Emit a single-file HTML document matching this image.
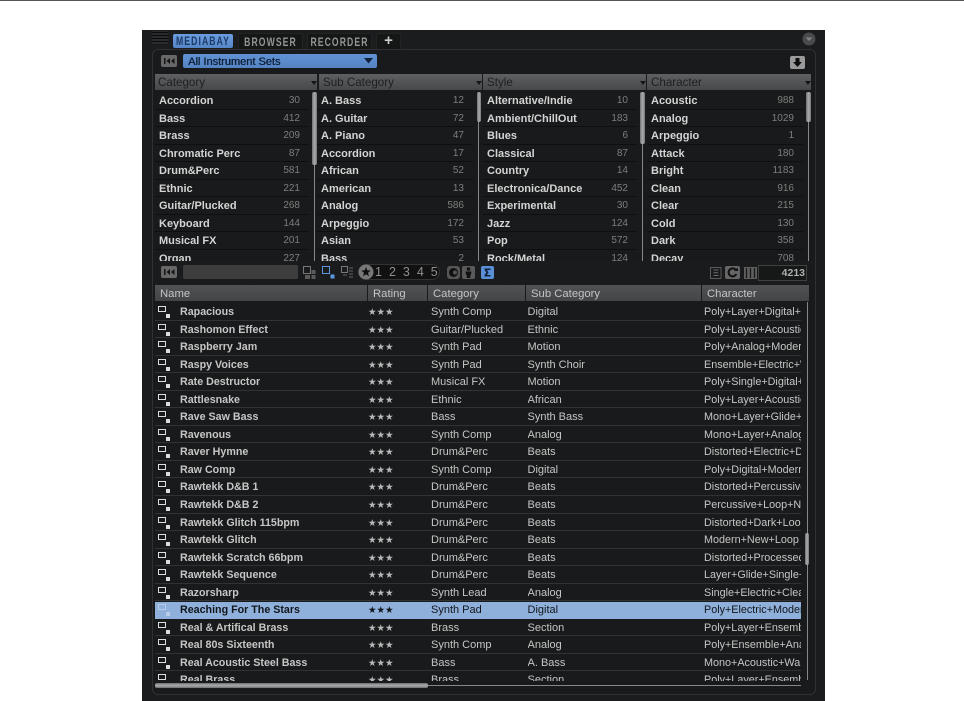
<!DOCTYPE html>
<html><head><meta charset="utf-8"><style>
html,body{margin:0;padding:0;background:#fff}
body{width:964px;height:701px;position:relative;overflow:hidden;font-family:"Liberation Sans",sans-serif}
div,span,svg{position:absolute;box-sizing:border-box}
#top{left:0;top:0;width:964px;height:1px;background:#555}
#app{left:142px;top:30px;width:683px;height:671px;background:#1b1c1d;overflow:hidden}
#inner{left:152px;top:49px;width:664px;height:646px;background:#191a1b;border:1px solid #303132;border-radius:6px}
.tab{top:33px;height:16px;background:#151616;border:1px solid #232324;border-bottom:0;border-radius:2px 2px 0 0;color:#949596;font:bold 12px/16px "Liberation Sans",sans-serif;text-align:center}
.tab span{left:-20px;right:-20px;top:0;letter-spacing:1.5px;transform:scaleX(.72);white-space:nowrap}
.tab.on{top:34px;height:14px;background:linear-gradient(#6b9ee0,#5585c6);border:0;border-radius:2px;color:#1c3a66;line-height:15px}
.btn{background:#686868;border-radius:2px}
.hd{top:74px;height:16px;background:linear-gradient(#5e6062,#46484a);color:#1e1f20;font:11.6px/18px "Liberation Sans",sans-serif;padding-left:3px}
.hd:after{content:"";position:absolute;right:0;top:7px;border:3.5px solid transparent;border-top:4px solid #151515;border-bottom:0}
.list{top:92px;height:169px;overflow:hidden}
.list div{position:relative;display:block;height:17.55px;border-bottom:1px solid #0f0f0f;color:#d4d4d4;font:bold 11px/19px "Liberation Sans",sans-serif;padding-left:4px}
.list i{position:absolute;right:9px;top:0;font:10px/18px "Liberation Sans",sans-serif;color:#7e7e7e}
.sb{width:1px;background:#85878a}
.th{background:linear-gradient(90deg,#6f7072,#aaacae 50%,#77787a);border-radius:2px}
.lh{top:285px;height:16px;background:linear-gradient(#505254,#434547);color:#c4c4c4;font:11.3px/18px "Liberation Sans",sans-serif;padding-left:5px}
#rows{left:155px;top:303px;width:646px;height:378px;overflow:hidden}
.r{position:relative;display:block;height:17.55px;border-bottom:1px solid #313233;color:#c6c6c6;font:11px/19px "Liberation Sans",sans-serif;white-space:nowrap}
.r span{top:0;overflow:hidden}
.r .a{left:3px;top:3px;width:8px;height:6px;border:1px solid #ddd}
.r .b{left:11px;top:11px;width:4px;height:4px;background:#ddd}
.r .n{left:25px;font-weight:bold;font-size:10.7px;color:#c6c6c6}
.r .s{left:213px;font-size:9.5px;letter-spacing:0;color:#b9b9b9}
.r .c{left:276px}
.r .u{left:372.5px}
.r .h{left:549px;width:97px;font-size:10.8px}
.r.sel{background:#8fb0da;color:#12161c;border-bottom:0;border-top:1px solid #1a1b1c;background-clip:padding-box}
.r.sel span{margin-top:-1px}
.r.sel .n,.r.sel .s{color:#12161c}
.r.sel .a{border-color:#b8cde8}
.r.sel .b{background:#b8cde8}
</style></head><body>
<div id="top"></div>
<div id="app"></div>
<div id="inner"></div>

<svg style="left:152px;top:31px" width="16" height="13"><rect width="16" height="13" fill="#2a2b2c"/><path d="M0 1.500h16M0 4.500h16M0 7.500h16M0 10.500h16" stroke="#0c0c0c" stroke-width="1"/></svg>
<div class="tab on" style="left:173px;width:60px"><span>MEDIABAY</span></div>
<div class="tab" style="left:238px;width:65px"><span>BROWSER</span></div>
<div class="tab" style="left:307px;width:65px"><span>RECORDER</span></div>
<div class="tab" style="left:376px;width:25px;color:#ccc;font-size:15px;line-height:13px">+</div>
<svg style="left:802px;top:32px" width="14" height="14"><circle cx="7" cy="7" r="6.500" fill="#4a4b4c"/><path d="M3.500 5.500h7L7 9z" fill="#828384"/></svg>

<div class="btn" style="left:161px;top:55px;width:16px;height:12px"></div>
<svg style="left:161px;top:55px" width="16" height="12"><path d="M3 3h1.500v6H3zM9 3v6L5.500 6zM13.500 3v6L10 6z" fill="#151515"/></svg>
<div style="left:183px;top:54px;width:194px;height:14px;background:linear-gradient(#6092d4,#5583c2);border-radius:2px;color:#10213a;font:11px/16px 'Liberation Sans',sans-serif;text-shadow:.4px 0 0 #10213a;padding-left:5px">All Instrument Sets</div>
<svg style="left:364px;top:58px" width="10" height="6"><path d="M0 0h9L4.500 5.500z" fill="#11233c"/></svg>
<svg style="left:790px;top:56px" width="15" height="13"><rect width="15" height="13" rx="2" fill="#9a9a9a"/><path d="M5.500 2h4v4h2.500L7.500 11 3 6h2.500z" fill="#0d0d0d"/></svg>

<div class="hd" style="left:155px;width:162px">Category</div>
<div class="hd" style="left:319px;width:163px;padding-left:4px">Sub Category</div>
<div class="hd" style="left:483px;width:163px;padding-left:4px">Style</div>
<div class="hd" style="left:647px;width:164px;padding-left:4px">Character</div>

<div class="list" style="left:155px;width:154px">
<div>Accordion<i>30</i></div><div>Bass<i>412</i></div><div>Brass<i>209</i></div><div>Chromatic Perc<i>87</i></div><div>Drum&amp;Perc<i>581</i></div><div>Ethnic<i>221</i></div><div>Guitar/Plucked<i>268</i></div><div>Keyboard<i>144</i></div><div>Musical FX<i>201</i></div><div>Organ<i>227</i></div>
</div>
<div class="list" style="left:317px;width:156px">
<div>A. Bass<i>12</i></div><div>A. Guitar<i>72</i></div><div>A. Piano<i>47</i></div><div>Accordion<i>17</i></div><div>African<i>52</i></div><div>American<i>13</i></div><div>Analog<i>586</i></div><div>Arpeggio<i>172</i></div><div>Asian<i>53</i></div><div>Bass<i>2</i></div>
</div>
<div class="list" style="left:483px;width:154px">
<div>Alternative/Indie<i>10</i></div><div>Ambient/ChillOut<i>183</i></div><div>Blues<i>6</i></div><div>Classical<i>87</i></div><div>Country<i>14</i></div><div>Electronica/Dance<i>452</i></div><div>Experimental<i>30</i></div><div>Jazz<i>124</i></div><div>Pop<i>572</i></div><div>Rock/Metal<i>124</i></div>
</div>
<div class="list" style="left:647px;width:156px">
<div>Acoustic<i>988</i></div><div>Analog<i>1029</i></div><div>Arpeggio<i>1</i></div><div>Attack<i>180</i></div><div>Bright<i>1183</i></div><div>Clean<i>916</i></div><div>Clear<i>215</i></div><div>Cold<i>130</i></div><div>Dark<i>358</i></div><div>Decay<i>708</i></div>
</div>

<div class="sb" style="left:314px;top:92px;height:169px"></div>
<div class="th" style="left:312px;top:92px;width:5px;height:73px"></div>
<div class="sb" style="left:478px;top:92px;height:169px"></div>
<div class="th" style="left:477px;top:92px;width:4px;height:30px"></div>
<div class="sb" style="left:642px;top:92px;height:169px"></div>
<div class="th" style="left:640px;top:92px;width:5px;height:52px"></div>
<div class="sb" style="left:808px;top:92px;height:169px"></div>
<div class="th" style="left:806px;top:92px;width:5px;height:30px"></div>

<div style="left:153px;top:261px;width:660px;height:24px;background:#1a1b1c"></div>
<div class="btn" style="left:161px;top:266px;width:16px;height:12px"></div>
<svg style="left:161px;top:266px" width="16" height="12"><path d="M3 3h1.500v6H3zM9 3v6L5.500 6zM13.500 3v6L10 6z" fill="#151515"/></svg>
<div style="left:183px;top:265px;width:115px;height:14px;background:#3d3d3d;border-radius:2px"></div>
<svg style="left:303px;top:266px" width="14" height="13" fill="none"><rect x=".5" y=".5" width="7" height="7" stroke="#777"/><path d="M8.500 4h4v4h-4zM2 9h5v4H2zM8.500 9h4v4h-4z" fill="#5a5a5a"/></svg>
<svg style="left:321px;top:265px" width="14" height="14" fill="none"><rect x="1.500" y="1.500" width="7" height="7" stroke="#5f98e0"/><rect x="9.500" y="9.500" width="4" height="4" fill="#5f98e0"/></svg>
<svg style="left:340px;top:266px" width="14" height="13" fill="none"><rect x="1.500" y=".5" width="6" height="6" stroke="#777"/><path d="M9 2h4M9 5h4M9 8h4M9 11h4M3 9h4" stroke="#555" stroke-width="1.300"/></svg>
<div style="left:358px;top:264px;width:82px;height:16px;background:#111;border:1px solid #333;border-radius:8px"></div>
<svg style="left:358px;top:264px" width="16" height="16"><circle cx="8" cy="8" r="7.500" fill="#777"/><path d="M8 3l1.300 3.400 3.500.1-2.800 2.200 1 3.500L8 10.200 5 12.200l1-3.500-2.800-2.200 3.500-.1z" fill="#0e0e0e"/></svg>
<span style="left:375px;top:265px;font:12.500px/15px 'Liberation Sans',sans-serif;color:#8f8f8f;letter-spacing:7px;white-space:nowrap">12345</span>
<svg style="left:447px;top:266px" width="13" height="13"><rect width="13" height="13" rx="3" fill="#555"/><circle cx="6.500" cy="6.500" r="4.500" fill="#111"/><circle cx="8" cy="6.500" r="2" fill="#555"/></svg>
<svg style="left:462px;top:266px" width="13" height="13"><rect width="13" height="13" rx="2" fill="#5a5a5a"/><circle cx="6.500" cy="3" r="1.800" fill="#111"/><path d="M3.500 5.500h6l-.6 3.500H8.300v3H4.700V9h-.6z" fill="#111"/></svg>
<svg style="left:481px;top:266px" width="13" height="13"><rect width="13" height="13" rx="2" fill="#5a8fd6"/><path d="M3.500 2.500h6V4H6L7.500 6.500 6 9h3.500v1.500h-6V9.300L5.300 6.500 3.500 3.700z" fill="#10233f"/></svg>
<svg style="left:710px;top:267px" width="12" height="12" fill="none"><rect x=".5" y=".5" width="10.500" height="11" stroke="#5a5a5a"/><path d="M3.500 3h5M3.500 5.800h4.500M3.500 8.500h5" stroke="#6a6a6a"/></svg>
<svg style="left:725px;top:266px" width="15" height="13"><rect width="15" height="13" rx="2" fill="#666"/><path d="M11 4.200A4 4 0 1 0 11.300 8" fill="none" stroke="#111" stroke-width="2"/><path d="M9 5h4V1.500z" fill="#111"/></svg>
<svg style="left:744px;top:267px" width="13" height="12"><rect width="13" height="12" fill="#5e5e5e"/><path d="M2.500 1v10M6.500 1v10M10.500 1v10" stroke="#1a1a1a" stroke-width="1.300"/></svg>
<div style="left:758px;top:265px;width:49px;height:16px;border:1px solid #3f4041;background:#161717;color:#b0b0b0;font:bold 10.500px/15px 'Liberation Sans',sans-serif;text-align:right;padding-right:1px">4213</div>

<div class="lh" style="left:155px;width:212px">Name</div>
<div class="lh" style="left:368px;width:59px">Rating</div>
<div class="lh" style="left:428px;width:97px">Category</div>
<div class="lh" style="left:526px;width:175px">Sub Category</div>
<div class="lh" style="left:702px;width:107px">Character</div>

<div id="rows">
<div class="r"><span class="a"></span><span class="b"></span><span class="n">Rapacious</span><span class="s">★★★</span><span class="c">Synth Comp</span><span class="u">Digital</span><span class="h">Poly+Layer+Digital+</span></div>
<div class="r"><span class="a"></span><span class="b"></span><span class="n">Rashomon Effect</span><span class="s">★★★</span><span class="c">Guitar/Plucked</span><span class="u">Ethnic</span><span class="h">Poly+Layer+Acoustic</span></div>
<div class="r"><span class="a"></span><span class="b"></span><span class="n">Raspberry Jam</span><span class="s">★★★</span><span class="c">Synth Pad</span><span class="u">Motion</span><span class="h">Poly+Analog+Modern</span></div>
<div class="r"><span class="a"></span><span class="b"></span><span class="n">Raspy Voices</span><span class="s">★★★</span><span class="c">Synth Pad</span><span class="u">Synth Choir</span><span class="h">Ensemble+Electric+Warm</span></div>
<div class="r"><span class="a"></span><span class="b"></span><span class="n">Rate Destructor</span><span class="s">★★★</span><span class="c">Musical FX</span><span class="u">Motion</span><span class="h">Poly+Single+Digital+Cold</span></div>
<div class="r"><span class="a"></span><span class="b"></span><span class="n">Rattlesnake</span><span class="s">★★★</span><span class="c">Ethnic</span><span class="u">African</span><span class="h">Poly+Layer+Acoustic</span></div>
<div class="r"><span class="a"></span><span class="b"></span><span class="n">Rave Saw Bass</span><span class="s">★★★</span><span class="c">Bass</span><span class="u">Synth Bass</span><span class="h">Mono+Layer+Glide+Hard</span></div>
<div class="r"><span class="a"></span><span class="b"></span><span class="n">Ravenous</span><span class="s">★★★</span><span class="c">Synth Comp</span><span class="u">Analog</span><span class="h">Mono+Layer+Analog</span></div>
<div class="r"><span class="a"></span><span class="b"></span><span class="n">Raver Hymne</span><span class="s">★★★</span><span class="c">Drum&amp;Perc</span><span class="u">Beats</span><span class="h">Distorted+Electric+Dark</span></div>
<div class="r"><span class="a"></span><span class="b"></span><span class="n">Raw Comp</span><span class="s">★★★</span><span class="c">Synth Comp</span><span class="u">Digital</span><span class="h">Poly+Digital+Modern</span></div>
<div class="r"><span class="a"></span><span class="b"></span><span class="n">Rawtekk D&amp;B 1</span><span class="s">★★★</span><span class="c">Drum&amp;Perc</span><span class="u">Beats</span><span class="h">Distorted+Percussive</span></div>
<div class="r"><span class="a"></span><span class="b"></span><span class="n">Rawtekk D&amp;B 2</span><span class="s">★★★</span><span class="c">Drum&amp;Perc</span><span class="u">Beats</span><span class="h">Percussive+Loop+New</span></div>
<div class="r"><span class="a"></span><span class="b"></span><span class="n">Rawtekk Glitch 115bpm</span><span class="s">★★★</span><span class="c">Drum&amp;Perc</span><span class="u">Beats</span><span class="h">Distorted+Dark+Loop</span></div>
<div class="r"><span class="a"></span><span class="b"></span><span class="n">Rawtekk Glitch</span><span class="s">★★★</span><span class="c">Drum&amp;Perc</span><span class="u">Beats</span><span class="h">Modern+New+Loop</span></div>
<div class="r"><span class="a"></span><span class="b"></span><span class="n">Rawtekk Scratch 66bpm</span><span class="s">★★★</span><span class="c">Drum&amp;Perc</span><span class="u">Beats</span><span class="h">Distorted+Processed</span></div>
<div class="r"><span class="a"></span><span class="b"></span><span class="n">Rawtekk Sequence</span><span class="s">★★★</span><span class="c">Drum&amp;Perc</span><span class="u">Beats</span><span class="h">Layer+Glide+Single+New</span></div>
<div class="r"><span class="a"></span><span class="b"></span><span class="n">Razorsharp</span><span class="s">★★★</span><span class="c">Synth Lead</span><span class="u">Analog</span><span class="h">Single+Electric+Clean</span></div>
<div class="r sel"><span class="a"></span><span class="b"></span><span class="n">Reaching For The Stars</span><span class="s">★★★</span><span class="c">Synth Pad</span><span class="u">Digital</span><span class="h">Poly+Electric+Modern</span></div>
<div class="r"><span class="a"></span><span class="b"></span><span class="n">Real &amp; Artifical Brass</span><span class="s">★★★</span><span class="c">Brass</span><span class="u">Section</span><span class="h">Poly+Layer+Ensemble</span></div>
<div class="r"><span class="a"></span><span class="b"></span><span class="n">Real 80s Sixteenth</span><span class="s">★★★</span><span class="c">Synth Comp</span><span class="u">Analog</span><span class="h">Poly+Ensemble+Analog</span></div>
<div class="r"><span class="a"></span><span class="b"></span><span class="n">Real Acoustic Steel Bass</span><span class="s">★★★</span><span class="c">Bass</span><span class="u">A. Bass</span><span class="h">Mono+Acoustic+Warm</span></div>
<div class="r"><span class="a"></span><span class="b"></span><span class="n">Real Brass</span><span class="s">★★★</span><span class="c">Brass</span><span class="u">Section</span><span class="h">Poly+Layer+Ensemble</span></div>
</div>

<div class="sb" style="left:807px;top:302px;height:378px"></div>
<div class="th" style="left:805px;top:533px;width:4px;height:32px"></div>
<div style="left:155px;top:685px;width:646px;height:1px;background:#85878a"></div>
<div style="left:155px;top:683px;width:273px;height:5px;background:linear-gradient(#6f7072,#aaacae 50%,#6f7072);border-radius:2px"></div>
</body></html>
